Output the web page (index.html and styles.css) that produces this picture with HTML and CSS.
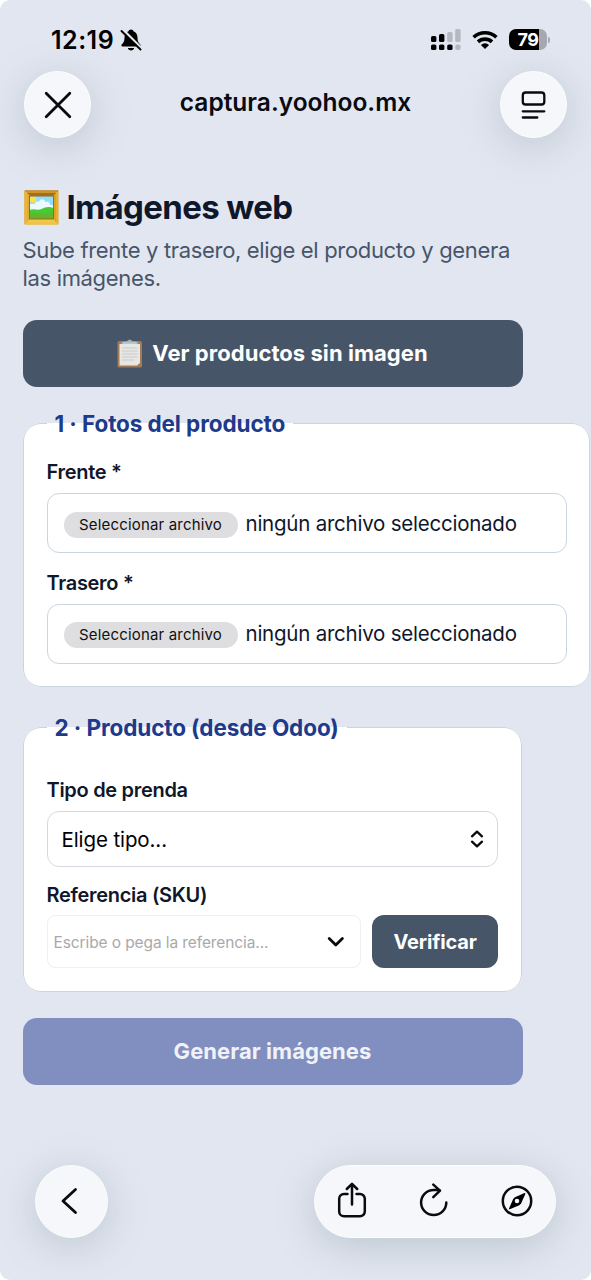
FILE: index.html
```html
<!DOCTYPE html>
<html lang="es">
<head>
<meta charset="utf-8">
<title>Imágenes web</title>
<link rel="stylesheet" href="styles.css">
</head>
<body>
<div class="screen">
  <header class="status">
    <span class="time">12:19</span>
    <svg class="bell" width="22" height="24" viewBox="0 0 22 24"><path d="M11 1.500c-1.500 0-2.200.8-2.500 1.700C5.700 4.200 4.600 6.500 4.500 9.500c-.1 4-1 5.200-2.600 6.700-1 1-.6 2.300.7 2.300h16.800c1.300 0 1.700-1.300.7-2.300-1.600-1.500-2.500-2.700-2.600-6.700-.1-3-1.200-5.300-4-6.300-.3-.9-1-1.700-2.500-1.700zM7.800 20h6.400c-.3 1.500-1.500 2.500-3.200 2.500S8.100 21.500 7.800 20z"/><path d="M2.500 1.500l19 19" stroke="#e2e6f1" stroke-width="3"/><path d="M1.500 3l19 18.500" stroke="#000" stroke-width="1.900" stroke-linecap="round"/></svg>
    <svg class="signal" width="30" height="22" viewBox="0 0 30 22"><g fill="#000"><rect x="0" y="7" width="5.400" height="6" rx="1.600"/><rect x="8" y="5" width="5.400" height="8" rx="1.600"/><rect x="0" y="15.500" width="5.400" height="5.500" rx="1.600"/><rect x="8" y="15.500" width="5.400" height="5.500" rx="1.600"/><rect x="16.200" y="15.500" width="5.400" height="5.500" rx="1.600"/></g><g fill="#b4b8c1"><rect x="16.200" y="3" width="5.400" height="10" rx="1.600"/><rect x="24.200" y="0" width="5.400" height="13" rx="1.600"/><rect x="24.200" y="15.500" width="5.400" height="5.500" rx="2"/></g></svg>
    <svg class="wifi" width="26" height="20" viewBox="0 0 26 20"><g fill="none" stroke="#000" stroke-width="3.600"><path d="M1.600 7.300a16.500 16.500 0 0 1 22.800 0"/><path d="M6 11.900a10.300 10.300 0 0 1 14 0"/></g><path d="M8.900 14.900a6 6 0 0 1 8.200 0L13 19z"/></svg>
    <div class="battery"><span>79</span></div>
  </header>
  <nav class="topbar">
    <button class="round" aria-label="Cerrar"><svg width="28" height="28" viewBox="0 0 28 28"><path d="M2.200 2.200l23.600 23.600M25.800 2.200L2.200 25.800" class="line thick"/></svg></button>
    <span class="host">captura.yoohoo.mx</span>
    <button class="round" aria-label="Menú"><svg width="26" height="30" viewBox="0 0 26 30"><rect x="1.800" y="2.500" width="21.500" height="12" rx="2.800" class="line"/><path d="M1.800 21.300h21.500M1.800 27.500h14.500" class="line"/></svg></button>
  </nav>
  <main>
    <h1><svg width="35" height="35" viewBox="0 0 35 35"><rect x=".5" y=".5" width="34" height="34" rx="1" fill="#dda323"/><path d="M.5.5h34L29 6H6z" fill="#a86e16"/><path d="M.5.5L6 6v23L.5 34.500z" fill="#e0ac35"/><path d="M.5 34.500L6 29h23l5.500 5.500z" fill="#f0c84c"/><path d="M2 2h31v31H2z" fill="none" stroke="#f0bd3e"/><path d="M5.500 6h24v23h-24z" fill="#91def8"/><circle cx="9" cy="9.500" r="3.200" fill="#ffe04c"/><path d="M11 14c0-2 2-3 4-2 1-4 6-3 6 0 3-1 5 0 5 3h3.500v5h-24v-6z" fill="#ecfaff"/><path d="M5.500 20c5-2 8 1 12-1s7-3 12-1v11h-24z" fill="#48ca35"/><path d="M5.500 24c8-3 14 2 24-3v8h-24z" fill="#65b52c"/><path d="M5.500 6h24v23h-24z" fill="none" stroke="#966c25" stroke-width="1"/></svg><span>Imágenes web</span></h1>
    <p class="intro">Sube frente y trasero, elige el producto y genera<br>las imágenes.</p>
    <button class="wide"><svg width="26" height="29" viewBox="0 0 26 29"><rect x=".5" y="2" width="24.500" height="26.500" rx="1.500" fill="#a37b55"/><path d="M2.500 5h20.500v19l-3 2.500H2.500z" fill="#e6e6e4"/><path d="M5 9h15.500M5 12h15.500M5 15h15.500M5 18h15.500M5 21h12" stroke="#c9c9c9" stroke-width="1.200"/><path d="M4 5c0-2 2-2.500 6-2.500C10.500 0 15 0 15.500 2.500c4 0 6 .5 6 2.500z" fill="#a3adb8"/><path d="M6 4h13.500" stroke="#d5dce2"/></svg><span>Ver productos sin imagen</span></button>
    <fieldset class="photos">
      <legend>1 · Fotos del producto</legend>
      <label class="lb-front">Frente *</label>
      <div class="file"><span class="pick">Seleccionar archivo</span><span class="none">ningún archivo seleccionado</span></div>
      <label class="lb-back">Trasero *</label>
      <div class="file"><span class="pick">Seleccionar archivo</span><span class="none">ningún archivo seleccionado</span></div>
    </fieldset>
    <fieldset class="product">
      <legend>2 · Producto (desde Odoo)</legend>
      <label class="lb-type">Tipo de prenda</label>
      <div class="select"><span>Elige tipo...</span><svg width="14" height="18" viewBox="0 0 14 18"><path d="M2 6.300l5-4.600 5 4.600M2 11.700l5 4.600 5-4.600" class="line"/></svg></div>
      <label class="lb-ref">Referencia (SKU)</label>
      <div class="row">
        <div class="combo"><span>Escribe o pega la referencia...</span><svg width="18" height="12" viewBox="0 0 18 12"><path d="M2.200 2.500l6.600 6.500 6.600-6.500" class="line thick"/></svg></div>
        <button class="verify"><span>Verificar</span></button>
      </div>
    </fieldset>
    <button class="wide generate"><span>Generar imágenes</span></button>
  </main>
  <footer class="bottombar">
    <button class="round big" aria-label="Atrás"><svg width="20" height="30" viewBox="0 0 20 30"><path d="M16.500 3.500L4 15l12.500 11.500" class="line thick"/></svg></button>
    <div class="pill">
      <svg width="30" height="38" viewBox="0 0 30 38"><path d="M10.500 12H7a4.800 4.800 0 0 0-4.800 4.800v12.700A4.800 4.800 0 0 0 7 34.300h16a4.800 4.800 0 0 0 4.800-4.800V16.800A4.800 4.800 0 0 0 23 12h-3.500M15 22.500V2.300M9.800 7L15 1.800 20.200 7" class="line bold"/></svg>
      <svg width="30" height="36" viewBox="0 0 30 36"><path d="M27.300 19.500A12.600 12.600 0 1 1 14.700 6.900h5.800M14.300 1.600l6.700 6-6.700 6.500" class="line bold"/></svg>
      <svg width="32" height="32" viewBox="0 0 32 32"><circle cx="16" cy="16" r="14.200" class="line bold"/><path d="M23.600 8.100c.5-.2.900.2.700.8l-4.200 9.500-1.800 1.800-9.500 4.100c-.6.200-1-.2-.8-.8l4.200-9.600 1.700-1.700z"/><circle cx="16" cy="16" r="2.300" fill="#f6f7fa"/></svg>
    </div>
  </footer>
</div>
</body>
</html>
```
FILE: styles.css
```css
* { box-sizing: border-box; }
body { margin: 0; background: #fff; font-family: Inter, sans-serif; color: #0f172a; }
.screen { width: 591px; height: 1280px; overflow: hidden; border-radius: 10px; background: #e2e6f1; display: flex; flex-direction: column; }
button { border: 0; padding: 0; margin: 0; font-family: inherit; display: flex; align-items: center; justify-content: center; }
svg { display: block; flex: none; }
span, legend, label { white-space: nowrap; }
.line { fill: none; stroke: #0b0b0d; stroke-width: 2.3; stroke-linecap: round; stroke-linejoin: round; }
.thick { stroke-width: 2.8; }
.bold { stroke-width: 2.5; }

.status { height: 71px; padding: 8px 44px 0 51px; display: flex; align-items: center; color: #000; }
.time { font-size: 25px; font-weight: 600; letter-spacing: .5px; width: 69px; }
.signal { margin-left: auto; }
.wifi { margin: 0 11px 0 11px; }
.battery { width: 38px; height: 21px; border-radius: 7px; background: linear-gradient(90deg, #000 0 30px, #a5a8b0 30px); color: #fff; font-size: 18px; font-weight: 700; line-height: 21px; text-align: center; letter-spacing: -.5px; position: relative; }
.battery::after { content: ""; position: absolute; right: -3px; top: 8px; width: 2px; height: 6px; border-radius: 0 2px 2px 0; background: #a5a8b0; }

.topbar { height: 67px; padding: 0 24px; display: flex; align-items: center; justify-content: space-between; }
.round { width: 67px; height: 67px; border-radius: 50%; background: #f6f7fa; border: 1px solid #fcfdfe; box-shadow: 0 8px 40px rgba(85, 115, 115, .25); }
.host { font-size: 24.5px; font-weight: 600; color: #090b10; margin-top: -5px; }

main { padding: 49px 0 0 22.5px; width: 590px; }
h1 { margin: 0; height: 40px; display: flex; align-items: center; gap: 8px; font-size: 33px; line-height: 40px; font-weight: 700; letter-spacing: -.65px; padding-left: 1px; }
.intro { margin: 9px 0 0; height: 56px; font-size: 22px; line-height: 28px; letter-spacing: -.33px; color: #475569; white-space: nowrap; }
.wide { width: 500px; height: 67px; margin-top: 27.5px; border-radius: 14px; background: #475569; color: #fff; font-size: 22px; font-weight: 650; letter-spacing: .05px; gap: 9px; }
fieldset { margin: 0; border: 1.5px solid #cbd5e1; border-radius: 18px; background: #fff; padding: 0 23px; min-width: 0; display: block; }
legend { padding: 0 8px; margin: 0; height: 28px; line-height: 29px; font-size: 22.5px; font-weight: 650; letter-spacing: -.1px; color: #1e3a8a; }
label { display: block; font-size: 20px; line-height: 24px; height: 24px; font-weight: 600; letter-spacing: -.3px; }
.photos { width: 567.5px; height: 278px; margin-top: 22.5px; }
.product { width: 499.5px; height: 279px; margin-top: 26px; }
.lb-front { margin-top: 23px; }
.lb-back { margin-top: 17.5px; }
.file { margin-top: 9px; height: 60px; border: 1.5px solid #cbd5e1; border-radius: 12px; display: flex; align-items: center; padding-left: 16px; gap: 8px; }
.pick { width: 174px; height: 26px; margin-top: 3px; border-radius: 13px; background: #dedee0; color: #111; font-size: 15px; line-height: 26px; letter-spacing: .18px; text-align: center; }
.none { font-size: 20.5px; letter-spacing: -.23px; }
.photos .file { margin-right: -.5px; }
.lb-type { margin-top: 37px; }
.select { margin-top: 9px; height: 56px; border: 1.5px solid #d5d9df; border-radius: 12px; display: flex; align-items: center; justify-content: space-between; padding: 0 13px 0 14px; font-size: 20.5px; letter-spacing: -.1px; color: #000; }
.lb-ref { margin-top: 16px; }
.row { display: flex; gap: 11px; margin-top: 8px; }
.combo { width: 315px; height: 53px; border: 1px solid #eff0f2; border-radius: 8px; display: flex; align-items: center; justify-content: space-between; padding: 0 15px 0 6px; color: #a9a9ab; font-size: 15.5px; letter-spacing: -.1px; }
.combo span { margin-top: 2px; }
.verify { width: 126px; height: 53px; border-radius: 12px; background: #475569; color: #fff; font-size: 20px; font-weight: 650; letter-spacing: -.15px; }
.generate { margin-top: 25.5px; background: #808fbf; color: #f0f2f8; }

.bottombar { margin-top: 80px; padding: 0 35px; display: flex; justify-content: space-between; }
.big { width: 73px; height: 73px; }
.big svg { margin-right: 5px; }
.pill { width: 242px; height: 73px; border-radius: 37px; background: #f6f7fa; border: 1px solid #fcfdfe; box-shadow: 0 8px 40px rgba(85, 115, 115, .28); display: flex; align-items: center; justify-content: space-between; padding: 0 22px 0 22px; }
```
